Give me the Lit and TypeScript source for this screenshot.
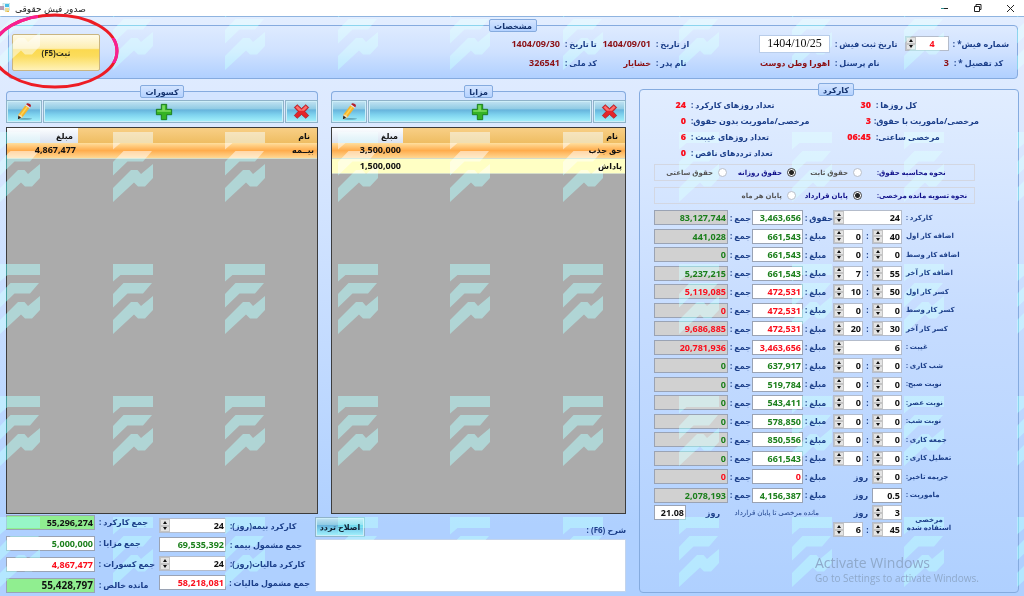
import { LitElement, html, svg, css } from "lit";
import { customElement, property, state } from "lit/decorators.js";

type Tone = "green" | "red" | "black";

interface WorkRow {
  label: string;
  minutes?: string;
  hours?: string;
  wide?: string;
  days?: string;
  plain?: boolean;
  rateLabel?: string;
  rate: string;
  total: string;
  tone: Tone;
}

const WORK_ROWS: WorkRow[] = [
  { label: "کارکرد :", wide: "24", rateLabel: "حقوق :", rate: "3,463,656", total: "83,127,744", tone: "green" },
  { label: "اضافه کار اول", minutes: "40", hours: "0", rate: "661,543", total: "441,028", tone: "green" },
  { label: "اضافه کار وسط", minutes: "0", hours: "0", rate: "661,543", total: "0", tone: "green" },
  { label: "اضافه کار آخر", minutes: "55", hours: "7", rate: "661,543", total: "5,237,215", tone: "green" },
  { label: "کسر کار اول", minutes: "50", hours: "10", rate: "472,531", total: "5,119,085", tone: "red" },
  { label: "کسر کار وسط", minutes: "0", hours: "0", rate: "472,531", total: "0", tone: "red" },
  { label: "کسر کار آخر", minutes: "30", hours: "20", rate: "472,531", total: "9,686,885", tone: "red" },
  { label: "غیبت :", wide: "6", rate: "3,463,656", total: "20,781,936", tone: "red" },
  { label: "شب کاری :", minutes: "0", hours: "0", rate: "637,917", total: "0", tone: "green" },
  { label: "نوبت صبح:", minutes: "0", hours: "0", rate: "519,784", total: "0", tone: "green" },
  { label: "نوبت عصر:", minutes: "0", hours: "0", rate: "543,411", total: "0", tone: "green" },
  { label: "نوبت شب:", minutes: "0", hours: "0", rate: "578,850", total: "0", tone: "green" },
  { label: "جمعه کاری :", minutes: "0", hours: "0", rate: "850,556", total: "0", tone: "green" },
  { label: "تعطیل کاری :", minutes: "0", hours: "0", rate: "661,543", total: "0", tone: "green" },
  { label: "جریمه تاخیر:", days: "0", rate: "0", total: "0", tone: "red" },
  { label: "ماموریت :", days: "0.5", plain: true, rate: "4,156,387", total: "2,078,193", tone: "green" },
];

@customElement("spin-box")
class SpinBox extends LitElement {
  @property() value = "0";
  @property() name = "";
  @property() align = "right";
  @property() color = "#111";

  static styles = css`
    :host { display: block; min-width: 0; }
    .box {
      display: flex; height: 15px; box-sizing: border-box; direction: ltr;
      border: 1px solid #b4bccb; background: #fff;
    }
    .arrows { display: flex; flex-direction: column; width: 10px; flex: none; }
    button {
      flex: 1; min-height: 0; padding: 0; border: 1px solid #c4c4c4; background: #e4e4e4;
      display: grid; place-items: center;
    }
    svg { display: block; width: 4px; height: 3px; }
    input {
      flex: 1; min-width: 0; width: 0; border: 0; padding: 0 1px; background: none;
      font: bold 9px/13px "Open Sans", "DejaVu Sans", sans-serif; outline: none;
      position: relative; z-index: 2;
    }
    .right { text-align: right; }
    .center { text-align: center; }
  `;

  private step(d: number) {
    this.value = String(Math.max(0, Number(this.value) + d));
  }

  render() {
    return html`<div class="box">
      <span class="arrows">
        <button aria-label="افزایش" @click=${() => this.step(1)}><svg viewBox="0 0 4 3"><path d="M2 0 4 3H0z" fill="#111" /></svg></button>
        <button aria-label="کاهش" @click=${() => this.step(-1)}><svg viewBox="0 0 4 3"><path d="M0 0h4L2 3z" fill="#111" /></svg></button>
      </span>
      <input class=${this.align} style="color:${this.color}" aria-label=${this.name} .value=${this.value} />
    </div>`;
  }
}

const pencil = html`<svg class="ico" viewBox="0 0 20 20" aria-hidden="true">
  <ellipse cx="11" cy="17.6" rx="8" ry="1" fill="#4c8ba3" opacity=".7" />
  <path d="M4 12.5 11.5 2.5 16 5.6 8.6 15.6 3.4 18z" fill="#f3b52f" />
  <path d="M5.6 13.2 13 3.5l1.3.9L7 14.400z" fill="#ffd452" />
  <path d="M4 12.500 3.200 18 8.600 15.600 6.800 13.600z" fill="#f5dcae" />
  <path d="M3.800 14 3.200 18 6.800 16.500z" fill="#222" />
  <path d="M11.500 2.500 12.500 1.200 17 4.300 16 5.600z" fill="#e8e8f0" />
  <path d="M12.300 1.500 13.500.2Q17.500.5 17.800 3.200L16.800 4.600z" fill="#b3202d" />
</svg>`;
const plus = html`<svg class="ico" viewBox="0 0 20 20" aria-hidden="true">
  <path d="M7 1.500h6V7h5.500v6H13v5.500H7V13H1.500V7H7z" fill="#35b324" stroke="#17791a" stroke-width="1" />
  <path d="M8 2.500h3V8h6.500v1.800H2.500V8H8z" fill="#8be36e" opacity=".8" />
</svg>`;
const cross = html`<svg class="ico small" viewBox="0 0 20 20" aria-hidden="true">
  <path d="M5 2 10 6.500 15 2 18.500 5.200 14 10l4.500 4.800L15 18l-5-4.500L5 18l-3.500-3.200L6 10 1.500 5.200z" fill="#e3242b" stroke="#a3161c" stroke-width=".8" />
  <path d="M5 3.200 10 7.800 15 3.200l2 2L13 9H7L3 5.200z" fill="#ff8c85" opacity=".75" />
</svg>`;

const MARK_X = [0, 113, 225, 338, 450, 563, 679, 792, 904, 1017];
const MARK_Y = [0, 132, 264, 396, 517];

@customElement("app-root")
class AppRoot extends LitElement {
  @state() private note = "";

  static styles = css`
    :host { display: block; }
    * { box-sizing: border-box; }
    .app {
      position: relative; min-height: 100vh; overflow: hidden; isolation: isolate;
      display: flex; flex-direction: column;
      font: bold 8px/12px "Open Sans", "DejaVu Sans", sans-serif; color: #1c3f8a;
      background: linear-gradient(#e3eeff, #dce9ff 20%, #afd0ff 88%);
      white-space: nowrap;
    }
    button, input, textarea { font: inherit; color: inherit; }
    input { min-width: 0; }
    .rtl { direction: rtl; }

    /* Text and icons stay above the repeated brand pattern, surfaces stay below it. */
    span, label, b, h1, legend, .ico, .num input, .date, .choices input { position: relative; z-index: 2; }

    .titlebar {
      display: flex; align-items: center; height: 17px; background: #fff;
      border-bottom: 1px solid #8fb4e0; color: #222; font-weight: normal; gap: 5px;
    }
    .titlebar h1 { margin: 0; font-size: 9px; line-height: 17px; font-weight: normal; flex: 1; }
    .titlebar svg { display: block; }
    .logo { width: 10px; height: 10px; }
    .win { border: 0; background: none; padding: 0; width: 28px; height: 16px; display: grid; place-items: center; }
    .win svg { width: 9px; height: 9px; }

    fieldset { margin: 0; padding: 0; border: 1px solid #85abdf; border-radius: 4px; min-width: 0; }
    legend {
      margin: 0 auto; padding: 0 4px; height: 13px; line-height: 11px;
      border: 1px solid #85abdf; border-radius: 2px; color: #16346f;
      background: linear-gradient(#d3e4ff, #b4d2ff);
    }
    .info { margin: 2px 6px 0 8px; background: linear-gradient(#deebff, #cfe1ff 50%, #b0d0ff); height: 60px; }
    .info-in { display: flex; justify-content: space-between; padding: 2px 8px 0 3px; }
    .save {
      width: 88px; height: 37px; border: 1px solid #c9b581; border-radius: 2px; padding: 0; color: #2a2a1c;
      background: linear-gradient(#fffbe8, #fdeeb2 38%, #fbd950 42%, #fbdc5c 60%, #fff2b8);
      direction: rtl;
    }
    .facts {
      display: grid; grid-template-columns: 55px 44px 65px 71px 98px 49px 32px 48px;
      column-gap: 5px; grid-template-rows: 19px 20px; align-items: center; direction: rtl;
    }
    .end { text-align: left; }
    .val { color: #8b1014; text-align: right; font-size: 9px; }
    .fa { font-size: 8px; }
    .date {
      height: 18px; width: 100%; border: 1px solid #b9cdea; background: #fff; color: #111; padding: 0;
      text-align: center; font: 12px/16px "Liberation Serif", serif; direction: ltr;
    }

    .body { flex: 1; display: grid; grid-template-columns: 620fr 380fr; column-gap: 13px; padding: 4px 5px 3px 6px; }
    .side { display: flex; flex-direction: column; padding-top: 2px; min-width: 0; }
    .lists { flex: 1; display: grid; grid-template-columns: 312fr 295fr; column-gap: 13px; }
    .list { display: flex; flex-direction: column; }
    .list fieldset { height: 15px; border-bottom: 0; border-radius: 4px 4px 0 0; background: #d3e4ff; }
    .tools { display: grid; grid-template-columns: 36px 1fr 33px; gap: 1px; margin-bottom: 4px; }
    .tool, .fix {
      border: 1px solid #8fb3c9; padding: 0; box-shadow: inset 0 0 0 1px #cdeef8;
      background: linear-gradient(#c3e3f2, #8fcbe4 38%, #66b3dc 42%, #7ed2ee 65%, #a6f3fc);
    }
    .tool { height: 23px; display: grid; place-items: center; }
    .ico { width: 18px; height: 18px; display: block; }
    .small { width: 17px; height: 17px; }
    .frame { flex: 1; background: #ababab; border: 1px solid #3c3c3c; }
    table { width: 100%; border-collapse: collapse; direction: rtl; color: #111; table-layout: fixed; }
    th, td { padding: 0 3px; height: 15px; line-height: 14px; text-align: right; font-weight: bold; }
    th { background: linear-gradient(#f8cf86, #efbd62); padding: 0 7px; }
    .amount { width: 71px; }
    th.amount { background: linear-gradient(#fdfeff, #d9e2f0); padding: 0 5px; }
    td { background: #ffffc4; border-bottom: 1px solid #d5dcc8; }
    .sel td { background: linear-gradient(#ffdf9e, #ffac4c 50%, #ffd894); }
    td.amount { font-size: 9px; padding-right: 2px; }

    .foot { display: grid; grid-template-columns: 304fr 311fr; column-gap: 5px; height: 79px; }
    .totals { display: flex; justify-content: space-between; }
    .tot { display: grid; align-items: center; column-gap: 4px; align-content: start; }
    .tot label { direction: rtl; text-align: left; }
    .t1 { grid-template-columns: 89px 56px; grid-auto-rows: 16px; row-gap: 5px; }
    .t2 { grid-template-columns: 67px 80px; grid-auto-rows: 15px; row-gap: 4px; padding-top: 4px; }
    .num { display: block; height: 15px; background: #fff; border: 1px solid #9aa3b4; }
    .num input {
      display: block; width: 100%; height: 13px; border: 0; padding: 0 1px; background: none;
      text-align: right; font-size: 9px; line-height: 13px;
    }
    .sum { background: #d1d1d1; }
    .lime { background: #90ee90; }
    .num.big input { font-size: 10px; }
    .green { color: #1b7f1b; }
    .red { color: #fb0d1b; }
    .black { color: #111; }
    .note { display: flex; flex-direction: column; gap: 2px; padding-top: 2px; }
    .note-top { display: flex; justify-content: space-between; align-items: center; height: 21px; }
    .note-top label { direction: rtl; padding-top: 6px; }
    .fix { width: 50px; height: 20px; color: #123; }
    textarea { flex: 1; width: 100%; border: 1px solid #c3d4ec; background: #fff; resize: none; padding: 2px; direction: rtl; margin-bottom: 1px; }

    .work { background: linear-gradient(#e1edff, #c6dcff 45%, #afd0ff); padding-left: 14px; }
    .counts {
      display: grid; direction: rtl; grid-template-columns: 103px 50px 125px 40px; column-gap: 5px;
      grid-auto-rows: 16px; padding: 1px 39px 0 0; align-items: center; height: 68px;
    }
    .counts b { color: #fb0d1b; font-size: 9px; }
    .choices {
      display: grid; direction: rtl; grid-template-columns: 93px 66px 69px 1fr; align-items: center; font-size: 7px;
      border: 1px solid #d3d7e2; height: 17px; margin: 0 43px 6px 0; padding-right: 4px; color: #555;
    }
    .choices.last { margin-bottom: 4px; }
    .choices > span { color: #10108a; text-align: left; }
    .choices label { display: flex; align-items: center; gap: 5px; padding-right: 15px; }
    .choices label:has(input:checked) { color: #10108a; }
    .choices input {
      appearance: none; margin: 0; width: 9px; height: 9px; border-radius: 50%; background: #fff; border: 1px solid #b9bfca; flex: none;
    }
    .choices input:checked { border-color: #444; background: radial-gradient(#222 0 2px, #fff 3px); }
    .rows { display: grid; }
    .row {
      display: grid; grid-template-columns: 74px 24px 51px 30px 30px 9px 30px 1fr; align-items: center;
      height: 19px;
    }
    .row:nth-child(even) { height: 18px; }
    .txt { direction: rtl; text-align: left; padding-left: 2px; }
    .colon { text-align: center; }
    .name { padding-left: 4px; font-size: 7px; }
    .wide { grid-column: 5 / 8; }
    .day { grid-column: 5 / 7; text-align: right; padding-right: 4px; }
    .leave { display: grid; grid-template-columns: 32px 34px 113px 30px 9px 30px 1fr; grid-auto-rows: 17px; align-items: center; }
    .leave .day3 { padding-left: 22px; }
    .leave .remain { text-align: right; padding-right: 14px; font-size: 7px; font-weight: normal; }
    .leave .day2 { grid-column: 4 / 6; text-align: right; padding-right: 4px; }
    .leave .used { grid-row: 1 / 3; grid-column: 7; line-height: 8px; text-align: center; width: 52px; padding: 5px 0 0 2px; font-size: 7px; }
    .leave .h { grid-column: 4; }
    .leave .c { grid-column: 5; text-align: center; }
    .leave .m { grid-column: 6; }

    .marks, .ring { position: absolute; inset: 0; pointer-events: none; }
    .marks { width: 100%; height: 100%; z-index: 1; mix-blend-mode: screen; }
    .ring { width: 124px; height: 92px; z-index: 3; }
    .activate {
      position: absolute; right: 38px; bottom: 10px; pointer-events: none; font-weight: normal;
      color: #8fa9cb; font-size: 10px; line-height: 15px; width: 171px; z-index: 2;
    }
    .activate strong { display: block; font-size: 14px; line-height: 17px; font-weight: normal; }
  `;

  private list(title: string, rows: string[][]) {
    return html`<section class="list">
      <fieldset class="rtl"><legend>${title}</legend></fieldset>
      <div class="tools">
        <button class="tool" aria-label="ویرایش ${title}">${pencil}</button>
        <button class="tool" aria-label="افزودن ${title}">${plus}</button>
        <button class="tool" aria-label="حذف ${title}">${cross}</button>
      </div>
      <div class="frame">
        <table>
          <thead><tr><th><span>نام</span></th><th class="amount"><span>مبلغ</span></th></tr></thead>
          <tbody>${rows.map((r, i) => html`<tr class=${i === 0 ? "sel" : ""}><td><span>${r[0]}</span></td><td class="amount"><span>${r[1]}</span></td></tr>`)}</tbody>
        </table>
      </div>
    </section>`;
  }

  private workRow(r: WorkRow, i: number) {
    const time = r.wide !== undefined
      ? html`<spin-box class="wide" name=${r.label} .value=${r.wide}></spin-box>`
      : r.days !== undefined
        ? html`<span class="txt day">روز</span>${r.plain
            ? html`<div class="num black"><input aria-label=${r.label} .value=${r.days} /></div>`
            : html`<spin-box name=${r.label} .value=${r.days}></spin-box>`}`
        : html`<spin-box name="${r.label} ساعت" .value=${r.hours ?? "0"}></spin-box><span class="colon">:</span>
            <spin-box name="${r.label} دقیقه" .value=${r.minutes ?? "0"}></spin-box>`;
    return html`<div class="row">
      <div class="num sum ${r.tone}"><input id="s${i}" readonly .value=${r.total} /></div>
      <label class="txt" for="s${i}">جمع :</label>
      <div class="num ${r.tone}"><input id="r${i}" .value=${r.rate} /></div>
      <label class="txt" for="r${i}">${r.rateLabel ?? "مبلغ :"}</label>
      ${time}
      <span class="txt name">${r.label}</span>
    </div>`;
  }

  private total(id: string, label: string, value: string, cls: string) {
    return html`<div class="num ${cls}"><input id=${id} .value=${value} /></div><label for=${id}>${label}</label>`;
  }

  private choice(name: string, label: string, checked = false) {
    return html`<label><input type="radio" name=${name} ?checked=${checked} />${label}</label>`;
  }

  private mark(x: number, y: number) {
    return svg`<g transform="translate(${x} ${y})">
      <path d="M0 0H40V11H7.500L0 17.500z" />
      <path d="M0 30 10.500 19H39L30 29.500H14.500L0 43.500z" />
      <path d="M0 56 18 38H24.500L28 42 40 32V46L32 54.500H25L21 50.500 0 70z" />
    </g>`;
  }

  render() {
    return html`<div class="app">
      <header class="titlebar">
        <svg class="logo" viewBox="0 0 10 10"><path d="M3 0h7v7H3z" fill="#e9eef5" stroke="#9aa" stroke-width=".6" /><path d="M0 3h4v4H0z" fill="#b23a6e" /><path d="M5 1h4v3H5z" fill="#3f7fd0" /><path d="M5 5h4v4H5z" fill="#e8b73a" /></svg>
        <h1>صدور فیش حقوقی</h1>
        <button class="win" aria-label="کوچک کردن"><svg viewBox="0 0 9 9"><path d="M1 4.500h7" stroke="#222" /></svg></button>
        <button class="win" aria-label="بازگردانی"><svg viewBox="0 0 9 9"><path d="M1.500 2.500h5v5h-5zM3 2.500V.500h5v5H6.500" fill="none" stroke="#222" /></svg></button>
        <button class="win" aria-label="بستن"><svg viewBox="0 0 9 9"><path d="M1 1l7 7M8 1 1 8" stroke="#222" /></svg></button>
      </header>

      <fieldset class="info">
        <legend>مشخصات</legend>
        <div class="info-in">
          <button class="save"><span>ثبت(F5)</span></button>
          <div class="facts">
            <span class="end">شماره فیش* :</span>
            <spin-box name="شماره فیش" value="4" align="center" color="#fb0d1b"></spin-box>
            <label class="end" for="date">تاریخ ثبت فیش :</label>
            <input id="date" class="date" .value=${"1404/10/25"} />
            <span class="end">از تاریخ :</span><span class="val">1404/09/01</span>
            <span class="end">تا تاریخ :</span><span class="val">1404/09/30</span>
            <span class="end">کد تفصیل * :</span><span class="val">3</span>
            <span class="end">نام پرسنل :</span><span class="val fa">اهورا وطن دوست</span>
            <span class="end">نام پدر :</span><span class="val fa">خشایار</span>
            <span class="end">کد ملی :</span><span class="val">326541</span>
          </div>
        </div>
      </fieldset>

      <main class="body">
        <div class="side">
          <div class="lists">
            ${this.list("کسورات", [["بیــمه", "4,867,477"]])}
            ${this.list("مزایا", [["حق جذب", "3,500,000"], ["پاداش", "1,500,000"]])}
          </div>
          <div class="foot">
            <div class="totals">
              <div class="tot t1">
                ${this.total("w", "جمع کارکرد :", "55,296,274", "lime black")}
                ${this.total("b", "جمع مزایا :", "5,000,000", "green")}
                ${this.total("d", "جمع کسورات :", "4,867,477", "red")}
                ${this.total("n", "مانده خالص :", "55,428,797", "lime big black")}
              </div>
              <div class="tot t2">
                <spin-box name="کارکرد بیمه" value="24"></spin-box><label>کارکرد بیمه(روز):</label>
                ${this.total("i", "جمع مشمول بیمه :", "69,535,392", "green")}
                <spin-box name="کارکرد مالیات" value="24"></spin-box><label>کارکرد مالیات(روز):</label>
                ${this.total("x", "جمع مشمول مالیات :", "58,218,081", "red")}
              </div>
            </div>
            <div class="note">
              <div class="note-top"><button class="fix"><span>اصلاح تردد</span></button><label for="note">شرح (F6) :</label></div>
              <textarea id="note" .value=${this.note} @input=${(e: Event) => (this.note = (e.target as HTMLTextAreaElement).value)}></textarea>
            </div>
          </div>
        </div>

        <fieldset class="work">
          <legend>کارکرد</legend>
          <div class="counts">
            <span class="end">کل روزها :</span><b>30</b><span class="end">تعداد روزهای کارکرد :</span><b>24</b>
            <span class="end">مرخصی/ماموریت با حقوق:</span><b>3</b><span class="end">مرخصی/ماموریت بدون حقوق:</span><b>0</b>
            <span class="end">مرخصی ساعتی:</span><b>06:45</b><span class="end">تعداد روزهای غیبت :</span><b>6</b>
            <span></span><span></span><span class="end">تعداد ترددهای ناقص :</span><b>0</b>
          </div>
          <div class="choices">
            <span>نحوه محاسبه حقوق:</span>
            ${this.choice("pay", "حقوق ثابت")}${this.choice("pay", "حقوق روزانه", true)}${this.choice("pay", "حقوق ساعتی")}
          </div>
          <div class="choices last">
            <span>نحوه تسویه مانده مرخصی:</span>
            ${this.choice("settle", "پایان قرارداد", true)}${this.choice("settle", "پایان هر ماه")}
          </div>
          <div class="rows">${WORK_ROWS.map((r, i) => this.workRow(r, i))}</div>
          <div class="leave">
            <div class="num black"><input aria-label="مانده مرخصی تا پایان قرارداد" .value=${"21.08"} /></div>
            <span class="txt day3">روز</span>
            <span class="txt remain">مانده مرخصی تا پایان قرارداد</span>
            <span class="txt day2">روز</span>
            <spin-box class="m" name="مرخصی روز" value="3"></spin-box>
            <span class="txt used">مرخصی<br />استفاده شده</span>
            <spin-box class="h" name="مرخصی ساعت" value="6"></spin-box><span class="c">:</span>
            <spin-box class="m" name="مرخصی دقیقه" value="45"></spin-box>
          </div>
        </fieldset>
      </main>

      <div class="activate"><strong>Activate Windows</strong>Go to Settings to activate Windows.</div>
      <svg class="marks" aria-hidden="true" fill="#0f7f7f">${MARK_Y.map((y) => MARK_X.map((x) => this.mark(x, y)))}</svg>
      <svg class="ring" viewBox="0 0 124 92" aria-hidden="true" fill="none" stroke-width="3">
        <clipPath id="tint"><path d="M0 0H38V42H0zM112 38h12v25h-12z" /></clipPath>
        <ellipse cx="55" cy="51" rx="62" ry="36" stroke="#ed1c24" />
        <ellipse cx="55" cy="51" rx="62" ry="36" stroke="#f91f93" clip-path="url(#tint)" />
      </svg>
    </div>`;
  }
}
